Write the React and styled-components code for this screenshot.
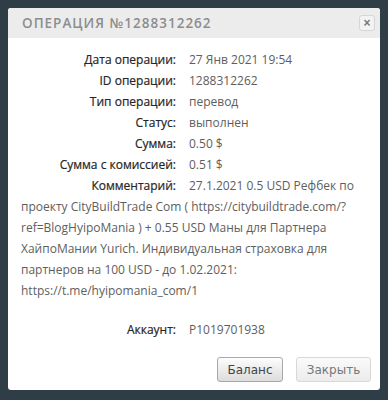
import React from 'react'
import styled, { createGlobalStyle } from 'styled-components'

const Global = createGlobalStyle`
  html, body {
    margin: 0;
    padding: 0;
    background: #2f3d47;
  }
  body {
    font-family: "Open Sans", "DejaVu Sans", sans-serif;
  }
`

const Page = styled.div`
  width: 388px;
  height: 400px;
  padding: 8px;
  box-sizing: border-box;
  background: #2f3d47;
`

const Dialog = styled.div`
  width: 372px;
  height: 382px;
  background: #fff;
  border-radius: 3px;
  overflow: hidden;
  display: flex;
  flex-direction: column;
`

const TitleBar = styled.div`
  height: 30px;
  background: #ececec;
  display: flex;
  align-items: center;
  justify-content: space-between;
  padding: 0 5px 0 14px;
`

const Title = styled.div`
  font-size: 13.5px;
  font-weight: 600;
  letter-spacing: 1px;
  color: #8d8d8d;
  text-transform: uppercase;
`

const CloseBtn = styled.button`
  width: 16px;
  height: 16px;
  padding: 0;
  border: 1px solid #d6d6d6;
  border-radius: 3px;
  background: #f3f3f3;
  color: #777;
  font-size: 12px;
  font-weight: 700;
  line-height: 13px;
  display: flex;
  align-items: center;
  justify-content: center;
`

const Body = styled.div`
  flex: 1;
  padding: 11px 14px 0 13px;
  font-size: 12px;
  line-height: 21px;
  color: #5e5e5e;
`

const Row = styled.div`
  display: flex;
`

const Label = styled.span`
  display: inline-block;
  width: 155px;
  margin-right: 13px;
  text-align: right;
  color: #262626;
  -webkit-text-stroke: 0.2px #262626;
`

const Value = styled.span`
  color: #5e5e5e;
`

const Comment = styled.p`
  margin: 0;
`

const Account = styled(Row)`
  margin-top: 18px;
`

const Footer = styled.div`
  display: flex;
  justify-content: flex-end;
  gap: 13px;
  padding: 0 9px 8px 0;
`

const Button = styled.button`
  width: ${p => p.$w}px;
  height: 25px;
  margin: 0;
  padding: 0;
  border-radius: 3px;
  font-family: "DejaVu Sans", sans-serif;
  font-size: 12px;
  color: ${p => (p.$muted ? '#777' : '#444')};
  border: 1px solid ${p => (p.$muted ? '#d8d8d8' : '#a8a8a8')};
  background: ${p => (p.$muted
    ? 'linear-gradient(#fafafa, #ececec)'
    : 'linear-gradient(#fdfdfd, #dcdcdc)')};
`

const rows = [
  ['Дата операции:', '27 Янв 2021 19:54'],
  ['ID операции:', '1288312262'],
  ['Тип операции:', 'перевод'],
  ['Статус:', 'выполнен'],
  ['Сумма:', '0.50 $'],
  ['Сумма с комиссией:', '0.51 $'],
]

export default function App() {
  return (
    <Page>
      <Global />
      <Dialog>
        <TitleBar>
          <Title>Операция №1288312262</Title>
          <CloseBtn>×</CloseBtn>
        </TitleBar>
        <Body>
          {rows.map(([l, v]) => (
            <Row key={l}>
              <Label>{l}</Label>
              <Value>{v}</Value>
            </Row>
          ))}
          <Comment>
            <Label>Комментарий:</Label>
            <Value>
              27.1.2021 0.5 USD Рефбек по проекту CityBuildTrade Com ( https://citybuildtrade.com/?ref=BlogHyipoMania ) + 0.55 USD Маны для Партнера ХайпоМании Yurich. Индивидуальная страховка для партнеров на 100 USD - до 1.02.2021: https://t.me/hyipomania_com/1
            </Value>
          </Comment>
          <Account>
            <Label>Аккаунт:</Label>
            <Value>P1019701938</Value>
          </Account>
        </Body>
        <Footer>
          <Button $w={66}>Баланс</Button>
          <Button $w={75} $muted>Закрыть</Button>
        </Footer>
      </Dialog>
    </Page>
  )
}
